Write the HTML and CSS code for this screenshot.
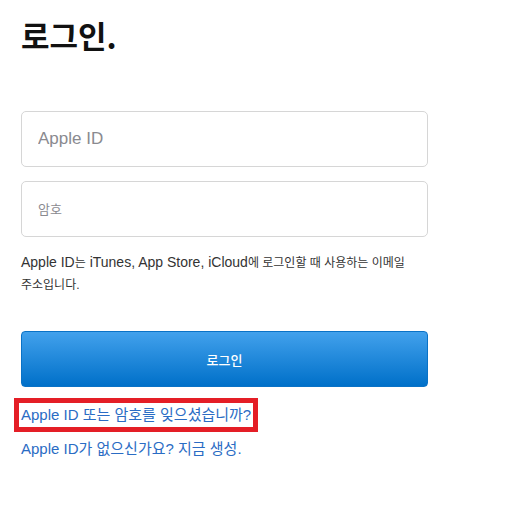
FILE: index.html
```html
<!DOCTYPE html>
<html lang="ko">
<head>
  <meta charset="UTF-8">
  <meta name="viewport" content="width=device-width, initial-scale=1.0">
  <title>로그인</title>
  <link rel="stylesheet" href="styles.css">
</head>
<body>

  <div class="signin-container">
    <h1 class="title">로그인.</h1>

    <form id="signinForm" class="signin-form">
      <input type="text" id="appleIdInput" class="field" placeholder="Apple ID">
      <input type="password" id="passwordInput" class="field field-ko" placeholder="암호">

      <p class="hint">Apple ID<span class="ko">는</span> iTunes, App Store, iCloud<span class="ko">에 로그인할 때 사용하는 이메일 <span class="nowrap">주소입니다.</span></span></p>

      <button type="button" id="signinBtn" class="signin-btn">로그인</button>
    </form>

    <div class="links">
      <a href="#" class="link forgot">Apple ID 또는 암호를 잊으셨습니까?</a>
      <a href="#" class="link">Apple ID가 없으신가요? 지금 생성.</a>
    </div>
  </div>

</body>
</html>
```

FILE: styles.css
```css
body {
  margin: 0;
  background-color: #ffffff;
  font-family: "Liberation Sans", "Noto Sans CJK KR", sans-serif;
  color: #333333;
}

.signin-container {
  width: 407px;
  padding: 12px 0 0 21px;
}

.title {
  margin: 0;
  font-family: "Noto Sans CJK KR", sans-serif;
  font-size: 31px;
  font-weight: 700;
  line-height: 46px;
  color: #111111;
}

.signin-form {
  display: flex;
  flex-direction: column;
  margin-top: 53px;
}

.field {
  box-sizing: border-box;
  height: 56px;
  padding: 0 16px;
  border: 1px solid #d6d6d6;
  border-radius: 5px;
  font-family: "Liberation Sans", "Noto Sans CJK KR", sans-serif;
  font-size: 17px;
  color: #333333;
  background-color: #ffffff;
  outline: none;
}

.field + .field {
  margin-top: 14px;
}

.field::placeholder {
  color: #8a8a8f;
}

.field-ko {
  font-size: 13px;
}

.hint {
  margin: 15px 0 0;
  font-size: 14px;
  line-height: 21px;
  color: #333333;
}

.hint .ko {
  font-size: 12px;
}

.nowrap {
  white-space: nowrap;
}

.signin-btn {
  height: 56px;
  margin-top: 35px;
  border: 1px solid #0a72c6;
  border-radius: 4px;
  background: linear-gradient(#42a1ec, #0070c9);
  color: #ffffff;
  font-family: "Noto Sans CJK KR", sans-serif;
  font-size: 13px;
  font-weight: 500;
  cursor: pointer;
}

.links {
  display: flex;
  flex-direction: column;
  align-items: flex-start;
  margin-top: 11px;
}

.link {
  font-size: 15px;
  line-height: 20px;
  color: #2a6cc4;
  text-decoration: none;
}

.forgot {
  margin-left: -7px;
  padding: 2px 2px 2px 2px;
  border: 5px solid #e41e26;
}

.forgot + .link {
  margin-top: 7px;
}
```
